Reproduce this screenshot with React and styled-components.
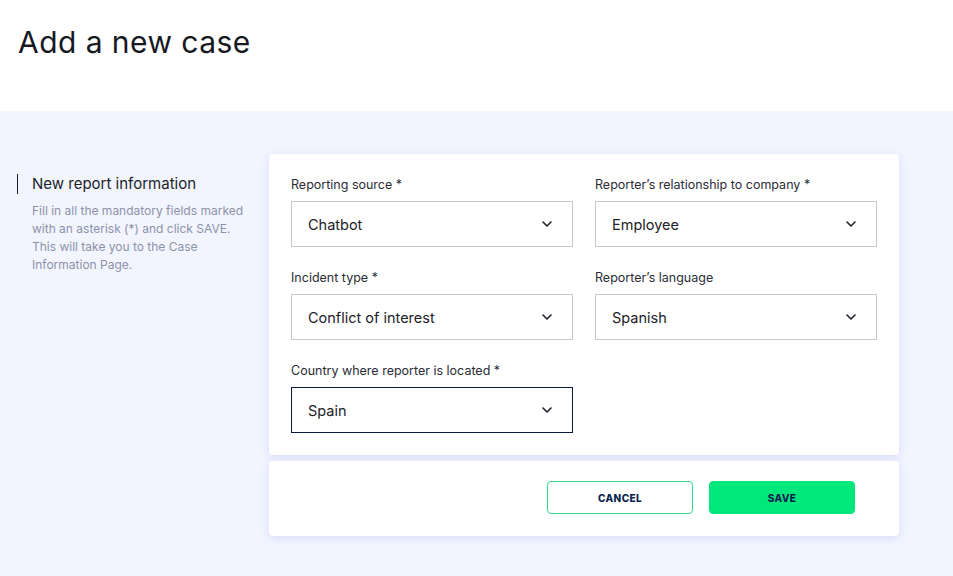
import React from 'react'
import styled, { createGlobalStyle } from 'styled-components'

const GlobalStyle = createGlobalStyle`
  html, body {
    margin: 0;
    padding: 0;
    background: #f2f5fe;
    font-family: Inter, "Noto Sans", sans-serif;
  }
  * { box-sizing: border-box; }
`

const Header = styled.header`
  height: 111px;
  background: #ffffff;
  padding: 24px 18px 0;
`

const Title = styled.h1`
  margin: 0;
  font-size: 30px;
  font-weight: 400;
  color: #16191f;
  letter-spacing: 0.45px;
`

const Main = styled.main`
  display: flex;
  padding: 43px 0 40px;
  min-height: 465px;
`

const Aside = styled.aside`
  width: 269px;
  padding: 20px 20px 0 17px;
`

const SectionTitle = styled.h2`
  margin: 0;
  padding-left: 14px;
  border-left: 1.5px solid #1b1e28;
  font-size: 15px;
  font-weight: 400;
  line-height: 20px;
  color: #1b1e28;
`

const Hint = styled.p`
  margin: 8px 0 0 15px;
  font-size: 12px;
  line-height: 18px;
  color: #8c92aa;
`

const Column = styled.div`
  width: 630px;
  display: flex;
  flex-direction: column;
  gap: 6px;
`

const Card = styled.section`
  background: #ffffff;
  border-radius: 4px;
  box-shadow: 0 2px 8px rgba(180, 190, 240, 0.45);
`

const FormGrid = styled(Card)`
  display: grid;
  grid-template-columns: 282px 282px;
  column-gap: 22px;
  row-gap: 22px;
  padding: 22px;
`

const Field = styled.label`
  display: flex;
  flex-direction: column;
  gap: 8px;
`

const Label = styled.span`
  font-size: 12.5px;
  line-height: 17px;
  color: #2a2d36;
`

const SelectBox = styled.div`
  height: 46px;
  border: 1px solid ${(p) => (p.$focused ? '#0b1a3c' : '#c6c8d2')};
  display: flex;
  align-items: center;
  justify-content: space-between;
  padding: 0 20px 0 16px;
  font-size: 14.5px;
  color: #1d2027;
`

const Actions = styled(Card)`
  height: 75px;
  display: flex;
  align-items: center;
  justify-content: flex-end;
  gap: 16px;
  padding: 0 44px 2px 0;
`

const Button = styled.button`
  width: 146px;
  height: 33px;
  border-radius: 4px;
  border: 1px solid ${(p) => (p.$primary ? '#00e87b' : '#2fd88a')};
  background: ${(p) => (p.$primary ? '#00e87b' : '#ffffff')};
  color: #0d1f4f;
  font-family: Inter, "Noto Sans", sans-serif;
  font-size: 10px;
  font-weight: 800;
  letter-spacing: 0.4px;
  cursor: pointer;
`

const Chevron = () => (
  <svg width="10" height="6" viewBox="0 0 10 6" fill="none">
    <polyline points="1,1 5,5 9,1" stroke="#1d2027" strokeWidth="1.6" strokeLinecap="round" strokeLinejoin="round" />
  </svg>
)

const fields = [
  { label: 'Reporting source *', value: 'Chatbot' },
  { label: 'Reporter’s relationship to company *', value: 'Employee' },
  { label: 'Incident type *', value: 'Conflict of interest' },
  { label: 'Reporter’s language', value: 'Spanish' },
  { label: 'Country where reporter is located *', value: 'Spain', focused: true },
]

export default function App() {
  return (
    <>
      <GlobalStyle />
      <Header>
        <Title>Add a new case</Title>
      </Header>
      <Main>
        <Aside>
          <SectionTitle>New report information</SectionTitle>
          <Hint>
            Fill in all the mandatory fields marked with an asterisk (*) and click SAVE. This will take you to the Case
            Information Page.
          </Hint>
        </Aside>
        <Column>
          <FormGrid>
            {fields.map((f) => (
              <Field key={f.label}>
                <Label>{f.label}</Label>
                <SelectBox $focused={f.focused}>
                  {f.value}
                  <Chevron />
                </SelectBox>
              </Field>
            ))}
          </FormGrid>
          <Actions>
            <Button>CANCEL</Button>
            <Button $primary>SAVE</Button>
          </Actions>
        </Column>
      </Main>
    </>
  )
}
